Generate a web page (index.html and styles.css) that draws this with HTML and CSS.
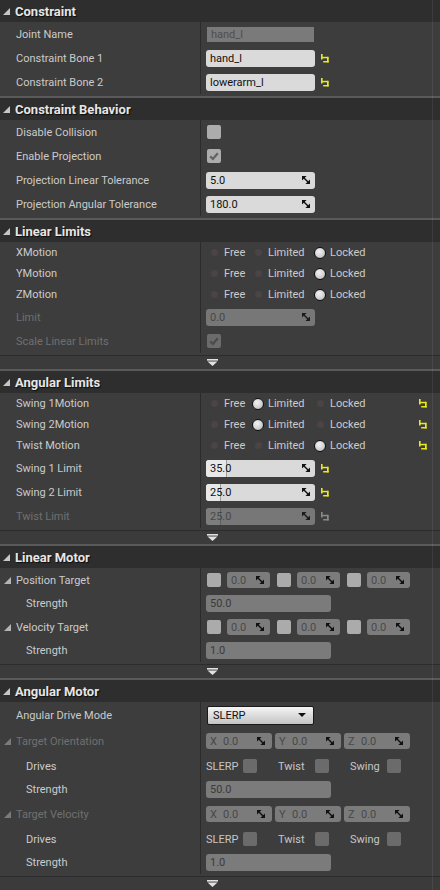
FILE: index.html
```html
<!DOCTYPE html>
<html>
<head>
<meta charset="utf-8">
<title>Constraint Details</title>
<link rel="stylesheet" href="styles.css">
</head>
<body>
<svg class="defs" width="0" height="0" aria-hidden="true">
  <symbol id="i-tri" viewBox="0 0 7 7"><polygon points="7,0 7,7 0,7" fill="currentColor"/></symbol>
  <symbol id="i-reset" viewBox="0 0 8 9">
    <rect x="0" y="0" width="1.6" height="5.5" fill="currentColor"/>
    <rect x="0.8" y="2.8" width="6.4" height="1.5" fill="currentColor"/>
    <rect x="6" y="2.8" width="1.7" height="5.6" fill="currentColor"/>
    <rect x="2.2" y="7" width="5.5" height="1.5" fill="currentColor"/>
  </symbol>
  <symbol id="i-spin" viewBox="0 0 8 8">
    <polygon points="0,0 4.6,0 0,4.6" fill="currentColor"/>
    <polygon points="8,3.4 8,8 3.4,8" fill="currentColor"/>
    <polygon points="1.2,2.2 2.2,1.2 6.8,5.8 5.8,6.8" fill="currentColor"/>
  </symbol>
  <symbol id="i-check" viewBox="0 0 14 14"><polyline points="3.2,7.4 5.9,10 10.8,4.2" fill="none" stroke="currentColor" stroke-width="2.2"/></symbol>
  <symbol id="i-drop" viewBox="0 0 8 4"><polygon points="0,0 8,0 4,4" fill="currentColor"/></symbol>
  <symbol id="i-expand" viewBox="0 0 11 7"><rect x="0" y="0" width="11" height="1.6" fill="currentColor"/><polygon points="0.5,2.6 10.5,2.6 5.5,7" fill="currentColor"/></symbol>
</svg>

<div class="panel">

  <section class="cat">
    <div class="cat-head"><svg class="tri"><use href="#i-tri"/></svg><span>Constraint</span></div>
    <div class="cat-body">
      <div class="row">
        <div class="name">Joint Name</div>
        <div class="value"><div class="field ro">hand_l</div></div>
      </div>
      <div class="row">
        <div class="name">Constraint Bone 1</div>
        <div class="value"><div class="field">hand_l</div><svg class="reset"><use href="#i-reset"/></svg></div>
      </div>
      <div class="row">
        <div class="name">Constraint Bone 2</div>
        <div class="value"><div class="field">lowerarm_l</div><svg class="reset"><use href="#i-reset"/></svg></div>
      </div>
    </div>
  </section>

  <section class="cat">
    <div class="cat-head"><svg class="tri"><use href="#i-tri"/></svg><span>Constraint Behavior</span></div>
    <div class="cat-body">
      <div class="row">
        <div class="name">Disable Collision</div>
        <div class="value"><span class="cb"></span></div>
      </div>
      <div class="row">
        <div class="name">Enable Projection</div>
        <div class="value"><span class="cb"><svg class="chk"><use href="#i-check"/></svg></span></div>
      </div>
      <div class="row">
        <div class="name">Projection Linear Tolerance</div>
        <div class="value"><div class="field num"><span class="txt">5.0</span><svg class="spin"><use href="#i-spin"/></svg></div></div>
      </div>
      <div class="row">
        <div class="name">Projection Angular Tolerance</div>
        <div class="value"><div class="field num"><span class="txt">180.0</span><svg class="spin"><use href="#i-spin"/></svg></div></div>
      </div>
    </div>
  </section>

  <section class="cat">
    <div class="cat-head"><svg class="tri"><use href="#i-tri"/></svg><span>Linear Limits</span></div>
    <div class="cat-body">
      <div class="row r21">
        <div class="name">XMotion</div>
        <div class="value"><div class="radios">
          <span class="opt o1"><span class="radio"></span>Free</span>
          <span class="opt o2"><span class="radio"></span>Limited</span>
          <span class="opt"><span class="radio on"></span>Locked</span>
        </div></div>
      </div>
      <div class="row r21">
        <div class="name">YMotion</div>
        <div class="value"><div class="radios">
          <span class="opt o1"><span class="radio"></span>Free</span>
          <span class="opt o2"><span class="radio"></span>Limited</span>
          <span class="opt"><span class="radio on"></span>Locked</span>
        </div></div>
      </div>
      <div class="row r21">
        <div class="name">ZMotion</div>
        <div class="value"><div class="radios">
          <span class="opt o1"><span class="radio"></span>Free</span>
          <span class="opt o2"><span class="radio"></span>Limited</span>
          <span class="opt"><span class="radio on"></span>Locked</span>
        </div></div>
      </div>
      <div class="row">
        <div class="name dis">Limit</div>
        <div class="value"><div class="field num off"><span class="txt">0.0</span><svg class="spin"><use href="#i-spin"/></svg></div></div>
      </div>
      <div class="row">
        <div class="name dis">Scale Linear Limits</div>
        <div class="value"><span class="cb off"><svg class="chk"><use href="#i-check"/></svg></span></div>
      </div>
    </div>
    <div class="cat-foot"><svg class="expand"><use href="#i-expand"/></svg></div>
  </section>

  <section class="cat">
    <div class="cat-head"><svg class="tri"><use href="#i-tri"/></svg><span>Angular Limits</span></div>
    <div class="cat-body">
      <div class="row r21">
        <div class="name">Swing 1Motion</div>
        <div class="value"><div class="radios">
          <span class="opt o1"><span class="radio"></span>Free</span>
          <span class="opt o2"><span class="radio on"></span>Limited</span>
          <span class="opt"><span class="radio"></span>Locked</span>
        </div><svg class="reset"><use href="#i-reset"/></svg></div>
      </div>
      <div class="row r21">
        <div class="name">Swing 2Motion</div>
        <div class="value"><div class="radios">
          <span class="opt o1"><span class="radio"></span>Free</span>
          <span class="opt o2"><span class="radio on"></span>Limited</span>
          <span class="opt"><span class="radio"></span>Locked</span>
        </div><svg class="reset"><use href="#i-reset"/></svg></div>
      </div>
      <div class="row r21">
        <div class="name">Twist Motion</div>
        <div class="value"><div class="radios">
          <span class="opt o1"><span class="radio"></span>Free</span>
          <span class="opt o2"><span class="radio"></span>Limited</span>
          <span class="opt"><span class="radio on"></span>Locked</span>
        </div><svg class="reset"><use href="#i-reset"/></svg></div>
      </div>
      <div class="row">
        <div class="name">Swing 1 Limit</div>
        <div class="value"><div class="field num slider"><span class="fill" style="width:19.4%"></span><span class="txt">35.0</span><svg class="spin"><use href="#i-spin"/></svg></div><svg class="reset"><use href="#i-reset"/></svg></div>
      </div>
      <div class="row">
        <div class="name">Swing 2 Limit</div>
        <div class="value"><div class="field num slider"><span class="fill" style="width:13.9%"></span><span class="txt">25.0</span><svg class="spin"><use href="#i-spin"/></svg></div><svg class="reset"><use href="#i-reset"/></svg></div>
      </div>
      <div class="row">
        <div class="name dis">Twist Limit</div>
        <div class="value"><div class="field num slider off"><span class="fill" style="width:13.9%"></span><span class="txt">25.0</span><svg class="spin"><use href="#i-spin"/></svg></div><svg class="reset dim"><use href="#i-reset"/></svg></div>
      </div>
    </div>
    <div class="cat-foot"><svg class="expand"><use href="#i-expand"/></svg></div>
  </section>

  <section class="cat">
    <div class="cat-head"><svg class="tri"><use href="#i-tri"/></svg><span>Linear Motor</span></div>
    <div class="cat-body">
      <div class="row">
        <div class="name exp"><svg class="tri sm"><use href="#i-tri"/></svg><span>Position Target</span></div>
        <div class="value vec">
          <span class="cb lite"></span><div class="vfield"><span>0.0</span><svg class="spin"><use href="#i-spin"/></svg></div>
          <span class="cb lite"></span><div class="vfield"><span>0.0</span><svg class="spin"><use href="#i-spin"/></svg></div>
          <span class="cb lite"></span><div class="vfield"><span>0.0</span><svg class="spin"><use href="#i-spin"/></svg></div>
        </div>
      </div>
      <div class="row r23">
        <div class="name sub">Strength</div>
        <div class="value"><div class="field wide off">50.0</div></div>
      </div>
      <div class="row">
        <div class="name exp"><svg class="tri sm"><use href="#i-tri"/></svg><span>Velocity Target</span></div>
        <div class="value vec">
          <span class="cb lite"></span><div class="vfield"><span>0.0</span><svg class="spin"><use href="#i-spin"/></svg></div>
          <span class="cb lite"></span><div class="vfield"><span>0.0</span><svg class="spin"><use href="#i-spin"/></svg></div>
          <span class="cb lite"></span><div class="vfield"><span>0.0</span><svg class="spin"><use href="#i-spin"/></svg></div>
        </div>
      </div>
      <div class="row r23">
        <div class="name sub">Strength</div>
        <div class="value"><div class="field wide off">1.0</div></div>
      </div>
    </div>
    <div class="cat-foot"><svg class="expand"><use href="#i-expand"/></svg></div>
  </section>

  <section class="cat">
    <div class="cat-head"><svg class="tri"><use href="#i-tri"/></svg><span>Angular Motor</span></div>
    <div class="cat-body">
      <div class="row r26">
        <div class="name">Angular Drive Mode</div>
        <div class="value"><div class="combo"><span>SLERP</span><svg class="drop"><use href="#i-drop"/></svg></div></div>
      </div>
      <div class="row r26">
        <div class="name exp dis"><svg class="tri sm"><use href="#i-tri"/></svg><span>Target Orientation</span></div>
        <div class="value xyz">
          <div class="afield"><span class="ax">X</span><span class="av">0.0</span><svg class="spin"><use href="#i-spin"/></svg></div>
          <div class="afield"><span class="ax">Y</span><span class="av">0.0</span><svg class="spin"><use href="#i-spin"/></svg></div>
          <div class="afield"><span class="ax">Z</span><span class="av">0.0</span><svg class="spin"><use href="#i-spin"/></svg></div>
        </div>
      </div>
      <div class="row">
        <div class="name sub">Drives</div>
        <div class="value">
          <span class="drive"><span class="dl">SLERP</span><span class="cb off"></span></span>
          <span class="drive"><span class="dl">Twist</span><span class="cb off"></span></span>
          <span class="drive"><span class="dl">Swing</span><span class="cb off"></span></span>
        </div>
      </div>
      <div class="row r23">
        <div class="name sub">Strength</div>
        <div class="value"><div class="field wide off">50.0</div></div>
      </div>
      <div class="row r26">
        <div class="name exp dis"><svg class="tri sm"><use href="#i-tri"/></svg><span>Target Velocity</span></div>
        <div class="value xyz">
          <div class="afield"><span class="ax">X</span><span class="av">0.0</span><svg class="spin"><use href="#i-spin"/></svg></div>
          <div class="afield"><span class="ax">Y</span><span class="av">0.0</span><svg class="spin"><use href="#i-spin"/></svg></div>
          <div class="afield"><span class="ax">Z</span><span class="av">0.0</span><svg class="spin"><use href="#i-spin"/></svg></div>
        </div>
      </div>
      <div class="row">
        <div class="name sub">Drives</div>
        <div class="value">
          <span class="drive"><span class="dl">SLERP</span><span class="cb off"></span></span>
          <span class="drive"><span class="dl">Twist</span><span class="cb off"></span></span>
          <span class="drive"><span class="dl">Swing</span><span class="cb off"></span></span>
        </div>
      </div>
      <div class="row r23">
        <div class="name sub">Strength</div>
        <div class="value"><div class="field wide off">1.0</div></div>
      </div>
    </div>
    <div class="cat-foot"><svg class="expand"><use href="#i-expand"/></svg></div>
  </section>

</div>
</body>
</html>
```
FILE: styles.css
```css
* { box-sizing: border-box; }

html, body {
  margin: 0;
  padding: 0;
  background: #2d2d2d;
}

body {
  width: 440px;
  height: 890px;
  overflow: hidden;
  font-family: Roboto, "DejaVu Sans", sans-serif;
  font-size: 11px;
  color: #cbcbcb;
}

.defs { position: absolute; width: 0; height: 0; overflow: hidden; }

.panel {
  position: relative;
  width: 440px;
}

.panel::after {
  content: "";
  position: absolute;
  left: 432px;
  top: 0;
  bottom: 0;
  width: 1px;
  background: rgba(255, 255, 255, 0.07);
}

.cat + .cat {
  border-top: 2px solid #5a5a5a;
}

.cat-head {
  height: 22px;
  display: flex;
  align-items: center;
  gap: 5px;
  padding-left: 3px;
  background: #2e2e2e;
  color: #e6e6e6;
  font-weight: bold;
  font-size: 13px;
  text-shadow: 1px 1px 1px #0c0c0c;
}

.tri {
  width: 7px;
  height: 7px;
  color: #c6c6c6;
  flex: none;
}

.tri.sm { color: #b4b4b4; }
.name.dis .tri.sm { color: #7a7a7a; }

.cat-body {
  background: #3d3d3d;
  padding-bottom: 2px;
}

.row {
  display: flex;
  height: 24px;
}

.row.r21 { height: 21px; }
.row.r23 { height: 23px; }
.row.r26 { height: 26px; }

.name {
  width: 201px;
  flex: none;
  border-right: 1px solid #2b2b2b;
  display: flex;
  align-items: center;
  padding-left: 16px;
  color: #cbcbcb;
  white-space: nowrap;
}

.name.sub { padding-left: 26px; }
.name.exp { padding-left: 4px; gap: 5px; }
.name.dis { color: #707070; }

.value {
  flex: 1;
  display: flex;
  align-items: center;
  padding-left: 5px;
  min-width: 0;
}

/* text & number fields */
.field {
  position: relative;
  width: 109px;
  height: 17px;
  border-radius: 3px;
  background: #dadada;
  color: #111;
  display: flex;
  align-items: center;
  justify-content: space-between;
  padding: 0 5px 0 4px;
  overflow: hidden;
  white-space: nowrap;
}

.field.ro {
  margin-left: 1px;
  width: 107px;
  height: 15px;
  border-radius: 0;
  background: #7a7a7a;
  color: #4e4e4e;
}

.field.off {
  background: #777777;
  color: #474747;
}

.field.wide {
  width: 125px;
  background: #7b7b7b;
  color: #3a3a3a;
}

.field .txt { position: relative; }

.field .fill {
  position: absolute;
  left: 0;
  top: 0;
  bottom: 0;
  background: #e8e8e8;
  border-right: 1px solid #9c9c9c;
}

.field.off .fill {
  background: #7d7d7d;
  border-right: 1px solid #5e5e5e;
}

.spin {
  width: 8px;
  height: 8px;
  color: #111;
  flex: none;
  position: relative;
}

.field.off .spin { color: #1c1c1c; }

.reset {
  width: 8px;
  height: 9px;
  margin-left: 6px;
  color: #eaea1a;
  flex: none;
}

.reset.dim { color: #8a8a8a; }

/* checkboxes */
.cb {
  width: 14px;
  height: 14px;
  border-radius: 2px;
  background: #acacac;
  margin-left: 1px;
  display: flex;
  align-items: center;
  justify-content: center;
  flex: none;
}

.cb.off { background: #6b6b6b; }
.cb.lite { background: #ababab; }

.chk {
  width: 14px;
  height: 14px;
  color: #626262;
}

.cb.off .chk { color: #4b4b4b; }

/* radios */
.radios {
  display: flex;
  align-items: center;
  width: 204px;
  margin-left: 3px;
  flex: none;
}

.opt {
  display: flex;
  align-items: center;
  gap: 5px;
  color: #cbcbcb;
}

.opt.o1 { width: 44px; }
.opt.o2 { width: 62px; }

.radio {
  width: 10px;
  height: 10px;
  display: flex;
  align-items: center;
  justify-content: center;
  flex: none;
}

.radio::before {
  content: "";
  flex: none;
  width: 7px;
  height: 7px;
  border-radius: 50%;
  background: #4a4444;
}

.radio.on::before {
  width: 10px;
  height: 10px;
  border: 1.5px solid #121212;
  background: radial-gradient(circle at 40% 35%, #f2f2f2 0%, #d2d2d2 55%, #a8a8a8 100%);
}

/* vector fields (linear motor) */
.value.vec { gap: 6px; }

.vfield {
  width: 43px;
  height: 16px;
  border-radius: 3px;
  background: #7c7c7c;
  color: #4a4a4a;
  display: flex;
  align-items: center;
  justify-content: space-between;
  padding: 0 6px 0 4px;
  flex: none;
}

/* xyz fields (angular motor) */
.value.xyz { gap: 3px; }

.afield {
  width: 66px;
  height: 16px;
  border-radius: 3px;
  background: #7b7b7b;
  color: #484848;
  display: flex;
  align-items: center;
  padding: 0 7px 0 4px;
  flex: none;
}

.afield .ax { width: 13px; }
.afield .av { flex: 1; }

/* combo */
.combo {
  margin-left: 1px;
  width: 107px;
  height: 19px;
  border: 1px solid #1a1a1a;
  border-radius: 2px;
  background: linear-gradient(#f6f6f6, #dcdcdc 50%, #c4c4c4);
  color: #111;
  display: flex;
  align-items: center;
  justify-content: space-between;
  padding: 0 7px 0 5px;
}

.drop {
  width: 8px;
  height: 4px;
  color: #111;
}

/* drives */
.drive {
  width: 72px;
  display: flex;
  align-items: center;
  flex: none;
}

.drive .dl {
  width: 37px;
  color: #c6c6c6;
}

.drive .cb { margin-left: 0; }

/* footer */
.cat-foot {
  height: 14px;
  border-top: 1px solid #2c2c2c;
  background: #3b3b3b;
  display: flex;
  align-items: center;
  padding-left: 207px;
}

.expand {
  width: 11px;
  height: 7px;
  color: #e2e2e2;
}
```
